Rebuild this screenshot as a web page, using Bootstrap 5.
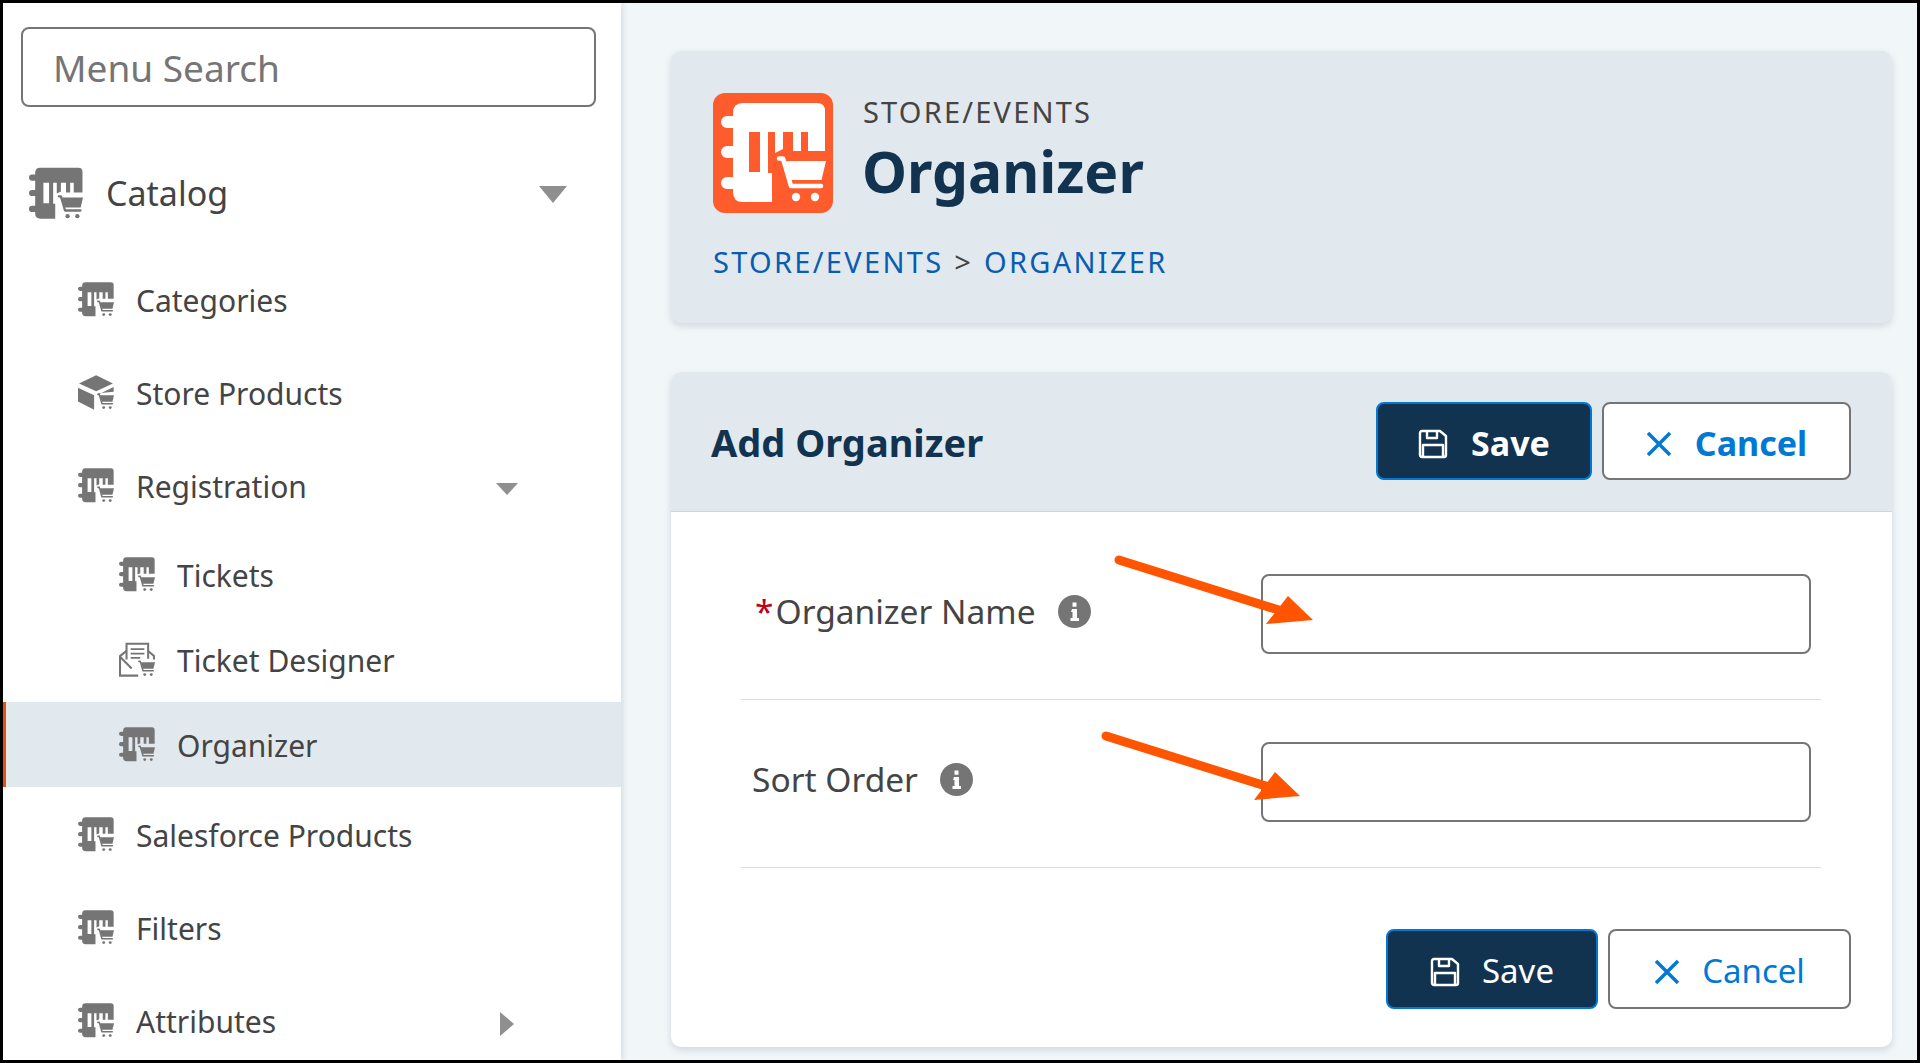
<!DOCTYPE html>
<html lang="en"><head><meta charset="utf-8"><title>Organizer</title>
<link href="https://cdn.jsdelivr.net/npm/bootstrap@5.3.0/dist/css/bootstrap.min.css" rel="stylesheet">
<style>
html,body{height:100%}
body{margin:0;background:#000;font-family:"Noto Sans","Open Sans",sans-serif;color:#444;overflow:hidden}
.frame{position:relative;margin:3px;height:1057px;background:#f1f6f9;overflow:hidden}
.side{width:618px;flex:none;background:#fff;box-shadow:2px 0 6px rgba(90,110,130,.18);overflow:hidden;z-index:1}
.search-wrap{padding:24px 25px 26px 18px}
.search-box.form-control{height:80px;border:2px solid #757575;border-radius:8px;font-size:37px;padding:0 30px;color:#444;box-shadow:none}
.search-box::placeholder{color:#757575;opacity:1}
.mitem{display:flex;align-items:center;color:#444;text-decoration:none}
.mitem svg.ic{color:#757575;flex:none}
.lbl{padding-top:2px}
.lv1{height:120px;padding-left:26px;font-size:34px}
.lv1 svg.ic{width:54px;height:53px;margin-right:23px}
.lv1 .lbl{padding-top:0}
.lv2{height:93px;padding-left:75px;font-size:30px}
.lv3{height:85px;padding-left:116px;font-size:30px}
.lv2 svg.ic,.lv3 svg.ic{width:36px;height:35px;margin-right:22px}
.lower{padding-top:2px}
.mitem.on{background:#e1e9ef;border-left:3px solid #e8500a;padding-left:113px}
.tri{flex:none;fill:#8f8f8f}
.tri-a{margin-left:auto;margin-right:54px;margin-top:2px}
.tri-b{margin-left:auto;margin-right:103px;margin-top:6px}
.tri-c{margin-left:auto;margin-right:107px;margin-top:6px}
.content{flex:1;min-width:0;padding:48px 25px 0 50px}
.panel.card{border:0;border-radius:10px;box-shadow:0 3px 7px rgba(90,110,130,.22);overflow:hidden}
.head-panel{height:272px;background:#e1e9ef;padding:42px 42px 0;margin-bottom:49px}
.logo{width:120px;height:120px;flex:none}
.kicker{font-size:29px;line-height:34px;letter-spacing:2.200px;color:#444;margin:2px 0 0 2px}
.big{font-size:57px;line-height:66px;font-weight:700;color:#113350;margin:9px 0 0 1px}
.crumbs{margin-top:31px;font-size:29px;line-height:36px;letter-spacing:2.300px;color:#444}
.crumbs a{color:#0a5cb0;text-decoration:none}
.crumbs span{margin:0 1px}
.form-panel{height:675px;background:#fff}
.form-panel .card-header{height:140px;background:#e1e9ef;border-bottom:1px solid #cfd6db;padding:30px 41px 0 40px;border-radius:0}
.sub{font-size:38px;font-weight:700;color:#113350;margin:0;line-height:80px}
.btnset{display:flex;gap:10px}
.act{height:78px;border-radius:8px;font-size:33px;line-height:1;display:inline-flex;align-items:center;justify-content:center;gap:22px;padding:3px 0 0}
.act svg{margin-top:2px}
.act.save{background:#113350;border:2px solid #0078d4;color:#fff}
.act.drop{background:#fff;border:2px solid #757575;color:#0078d4}
.sv1{width:216px}.cn1{width:249px}.sv2{width:212px}.cn2{width:243px}
.act.tall{height:80px}
.act.bold{font-weight:700;font-size:34px;gap:23px}
.form-panel .card-body{padding:0 41px 0 70px}
.frow{display:flex;align-items:center;margin-right:30px;border-bottom:1px solid #ddd}
.fr1{padding:62px 0 45px}.fr2{padding:42px 0 45px}
.flabel{width:520px;flex:none;font-size:33.500px;display:flex;align-items:center;margin:0;color:#444;padding-bottom:5px}
.fr1 .flabel{padding-left:14px}.fr2 .flabel{padding-left:11px}
.star{color:#c00014;margin-right:2px}
.finput.form-control{width:550px;height:80px;border:2px solid #757575;border-radius:8px;flex:none;box-shadow:none}
.info{width:33px;height:33px;flex:none;margin-left:22px}
.foot{padding-top:61px}
.marks{position:absolute;left:-3px;top:-3px;z-index:5;pointer-events:none}
</style></head>
<body>
<svg class="d-none" xmlns="http://www.w3.org/2000/svg">
<symbol id="cartg" viewBox="0 0 120 120"><g>
<path d="M66 65.500H70L78 93H108" fill="none" stroke="currentColor" stroke-width="4.500" stroke-linecap="round" stroke-linejoin="round"/>
<path d="M72 68H113L108.500 87H77.500Z" fill="currentColor"/>
<circle cx="83" cy="104" r="4.200" fill="currentColor"/><circle cx="102" cy="104" r="4.200" fill="currentColor"/></g></symbol>
<symbol id="book" viewBox="8 10 105 100">
<path fill-rule="evenodd" fill="currentColor" d="M30 10H104Q112 10 112 18V58H95V39H88V58H80V39H70V56L62 60V39H55V80H59V109H30Q20 109 20 99V96H14a6 6 0 0 1 0-12H20V65H14a6 6 0 0 1 0-12H20V35H14a6 6 0 0 1 0-12H20V20Q20 10 30 10ZM36 39V79H47V39Z"/>
<use href="#cartg" x="0" y="0" width="120" height="120"/></symbol>
<symbol id="cube" viewBox="8 10 105 100">
<path fill="currentColor" d="M61 10L110 34L61 56L11 34ZM8 46L55 68V110L8 86ZM67 66L112 44V58L67 62Z"/>
<use href="#cartg" x="0" y="0" width="120" height="120"/></symbol>
<symbol id="tick" viewBox="8 10 105 100">
<g fill="none" stroke="currentColor" stroke-width="6"><path d="M30 60V14H93V58"/><path d="M42 30H82M42 43H82M42 55H70" stroke-width="5"/><path d="M30 35L11 50V107H64M11 52L45 86M93 35L110 50V60"/></g>
<use href="#cartg" x="0" y="0" width="120" height="120"/></symbol>
<symbol id="floppy" viewBox="0 0 30 30"><path fill="none" stroke="currentColor" stroke-width="2.400" stroke-linejoin="round" d="M2 4a2 2 0 0 1 2-2H22L28 7V26a2 2 0 0 1-2 2H4a2 2 0 0 1-2-2ZM5 28V16H25V28M9 2V9H19V2"/></symbol>
<symbol id="cross" viewBox="0 0 26 26"><path fill="none" stroke="currentColor" stroke-width="3.500" d="M2 2L24 24M24 2L2 24"/></symbol>
<symbol id="infog" viewBox="0 0 33 33"><circle cx="16.500" cy="16.500" r="16.500" fill="#757575"/><path fill="#fff" d="M14 14H19V23H21V26H12.500V23H14.500V17H13ZM14.500 7.500H18.500V11.800H14.500Z"/></symbol>
</svg>
<div class="frame d-flex">
<aside class="side">
<div class="search-wrap"><input class="form-control search-box" type="text" placeholder="Menu Search"></div>
<nav class="d-flex flex-column">
<a class="mitem lv1" href="#"><svg class="ic"><use href="#book"/></svg><span class="lbl">Catalog</span><svg class="tri tri-a" width="28" height="17" viewBox="0 0 28 17"><path d="M0 0H28L14 17Z"/></svg></a>
<a class="mitem lv2" href="#"><svg class="ic"><use href="#book"/></svg><span class="lbl">Categories</span></a>
<a class="mitem lv2" href="#"><svg class="ic"><use href="#cube"/></svg><span class="lbl">Store Products</span></a>
<a class="mitem lv2" href="#"><svg class="ic"><use href="#book"/></svg><span class="lbl">Registration</span><svg class="tri tri-b" width="22" height="12" viewBox="0 0 22 12"><path d="M0 0H22L11 12Z"/></svg></a>
<a class="mitem lv3" href="#"><svg class="ic"><use href="#book"/></svg><span class="lbl">Tickets</span></a>
<a class="mitem lv3" href="#"><svg class="ic"><use href="#tick"/></svg><span class="lbl">Ticket Designer</span></a>
<a class="mitem lv3 on" href="#"><svg class="ic"><use href="#book"/></svg><span class="lbl">Organizer</span></a>
<a class="mitem lv2 lower" href="#"><svg class="ic"><use href="#book"/></svg><span class="lbl">Salesforce Products</span></a>
<a class="mitem lv2 lower" href="#"><svg class="ic"><use href="#book"/></svg><span class="lbl">Filters</span></a>
<a class="mitem lv2 lower" href="#"><svg class="ic"><use href="#book"/></svg><span class="lbl">Attributes</span><svg class="tri tri-c" width="14" height="24" viewBox="0 0 14 24"><path d="M0 0L14 12L0 24Z"/></svg></a>
</nav>
</aside>
<main class="content">
<section class="card panel head-panel">
<div class="d-flex gap-4">
<svg class="logo" viewBox="0 0 120 120"><rect width="120" height="120" rx="12" fill="#ff5c2e"/><g color="#fff"><use href="#book" x="8" y="10" width="105" height="100"/></g></svg>
<div class="ms-1"><div class="kicker">STORE/EVENTS</div><h1 class="big">Organizer</h1></div>
</div>
<div class="crumbs"><a href="#">STORE/EVENTS</a><span> &gt; </span><a href="#">ORGANIZER</a></div>
</section>
<section class="card panel form-panel">
<div class="card-header d-flex justify-content-between">
<h2 class="sub">Add Organizer</h2>
<div class="btnset"><button class="btn act save bold sv1" type="button"><svg width="30" height="30"><use href="#floppy"/></svg>Save</button><button class="btn act drop bold cn1" type="button"><svg width="26" height="26"><use href="#cross"/></svg>Cancel</button></div>
</div>
<div class="card-body">
<div class="frow fr1"><label class="flabel"><span class="star">*</span>Organizer Name<svg class="info"><use href="#infog"/></svg></label><input class="form-control finput" type="text"></div>
<div class="frow fr2"><label class="flabel">Sort Order<svg class="info"><use href="#infog"/></svg></label><input class="form-control finput" type="text"></div>
<div class="foot btnset justify-content-end"><button class="btn act tall save sv2" type="button"><svg width="30" height="30"><use href="#floppy"/></svg>Save</button><button class="btn act tall drop cn2" type="button"><svg width="26" height="26"><use href="#cross"/></svg>Cancel</button></div>
</div>
</section>
</main>
<svg class="marks" width="1920" height="1063" viewBox="0 0 1920 1063"><g stroke="#ff5500" stroke-width="9" stroke-linecap="round" fill="#ff5500"><path d="M1119 560L1285 612"/><path d="M1106 736L1272 788"/></g><path fill="#ff5500" d="M1313 620L1288 596L1266 624ZM1300 796L1275 772L1254 800Z"/></svg>
</div>
</body></html>
